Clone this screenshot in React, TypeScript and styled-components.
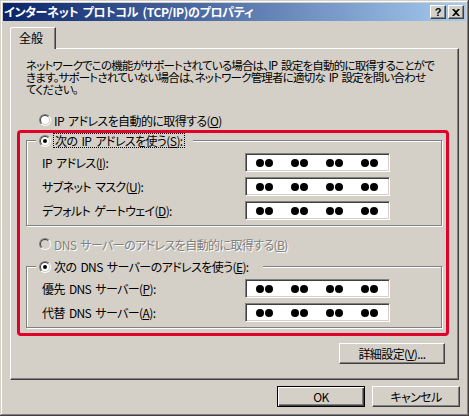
import React from "react";
import styled, { createGlobalStyle, css } from "styled-components";

const FACE = "#d4d0c8";
const UI_FONT = `"Noto Sans CJK JP", "Noto Sans", sans-serif`;

const GlobalStyle = createGlobalStyle`
  html, body { margin: 0; padding: 0; background: ${FACE}; }
  body { font-family: ${UI_FONT}; font-size: 12px; }
  * { box-sizing: border-box; }
`;

const Window = styled.div`
  width: 469px;
  height: 416px;
  background: ${FACE};
  padding: 3px;
  display: flex;
  flex-direction: column;
  color: #000;
  font-feature-settings: "palt";
  letter-spacing: -0.6px;
  word-spacing: 2px;
  box-shadow: inset -1px -1px 0 #404040, inset 1px 1px 0 ${FACE},
    inset -2px -2px 0 #808080, inset 2px 2px 0 #fff;
`;

const TitleBar = styled.div`
  height: 18px;
  display: flex;
  align-items: center;
  padding: 0 2px 0 1px;
  background: linear-gradient(to right, #0a246a, #a6caf0);
`;

const TitleText = styled.div`
  flex: 1;
  color: #fff;
  font-weight: bold;
  font-size: 12px;
  line-height: 18px;
  letter-spacing: -0.3px;
  white-space: nowrap;
`;

const CaptionButton = styled.div`
  width: 16px;
  height: 14px;
  margin-left: 2px;
  background: ${FACE};
  border: 1px solid;
  border-color: #fff #404040 #404040 #fff;
  box-shadow: inset -1px -1px 0 #808080;
  display: flex;
  align-items: center;
  justify-content: center;
  font-family: "Liberation Sans", sans-serif;
  font-weight: bold;
  font-size: 11px;
  line-height: 12px;
  letter-spacing: 0;
`;

const Body = styled.div`
  flex: 1;
  display: flex;
  flex-direction: column;
  padding: 6px 6px 0 7px;
`;

const TabStrip = styled.div`
  display: flex;
  height: 21px;
`;

const Tab = styled.div`
  position: relative;
  z-index: 1;
  width: 46px;
  height: 22px;
  padding: 3px 0 0 8px;
  background: ${FACE};
  border-top: 1px solid #fff;
  border-left: 1px solid #fff;
  border-right: 1px solid #404040;
  border-top-left-radius: 2px;
  box-shadow: inset -1px 0 0 #808080;
  line-height: 14px;
  letter-spacing: 0;
`;

const Panel = styled.div`
  width: 449px;
  height: 332px;
  display: flex;
  flex-direction: column;
  padding-top: 10px;
  border-top: 1px solid #fff;
  border-left: 1px solid #fff;
  border-right: 1px solid #404040;
  border-bottom: 1px solid #404040;
  box-shadow: inset -1px -1px 0 #808080;
`;

const Description = styled.div`
  margin-left: 15px;
  font-size: 11.5px;
  line-height: 12px;
  white-space: nowrap;
  letter-spacing: -0.8px;
`;

const RadioRow = styled.div<{ $mt: number; $ml: number }>`
  display: flex;
  align-items: center;
  gap: 3px;
  height: 14px;
  margin-top: ${(p) => p.$mt}px;
  margin-left: ${(p) => p.$ml}px;
  white-space: nowrap;
`;

const RadioOuter = styled.span`
  width: 12px;
  height: 12px;
  flex: none;
  border-radius: 50%;
  border: 1px solid;
  border-color: #808080 #fff #fff #808080;
  display: flex;
`;

const RadioInner = styled.span<{ $disabled?: boolean }>`
  flex: 1;
  border-radius: 50%;
  border: 1px solid;
  border-color: #404040 ${FACE} ${FACE} #404040;
  background: ${(p) => (p.$disabled ? FACE : "#fff")};
  display: flex;
  align-items: center;
  justify-content: center;
`;

const RadioDot = styled.span`
  width: 4px;
  height: 4px;
  border-radius: 50%;
  background: #000;
`;

const Label = styled.span<{ $disabled?: boolean; $focus?: boolean }>`
  line-height: 13px;
  ${(p) =>
    p.$disabled &&
    css`
      color: #808080;
      text-shadow: 1px 1px 0 #fff;
    `}
  ${(p) =>
    p.$focus &&
    css`
      outline: 1px dotted #000;
      outline-offset: 0;
      padding: 0 1px;
    `}
`;

const Key = styled.u`
  text-decoration: underline;
  text-underline-offset: 1px;
`;

const Radio = ({ checked, disabled }: { checked?: boolean; disabled?: boolean }) => (
  <RadioOuter>
    <RadioInner $disabled={disabled}>{checked && <RadioDot />}</RadioInner>
  </RadioOuter>
);

const RedFrame = styled.div`
  width: 432px;
  margin: 3px 0 0 6px;
  border: 3px solid #e0002a;
  border-radius: 4px;
  padding: 0 0 5px 6px;
  display: flex;
  flex-direction: column;
`;

const GroupBox = styled.fieldset<{ $mt: number }>`
  width: 416px;
  margin: ${(p) => p.$mt}px 0 0 0;
  padding: 0;
  border: 1px solid #808080;
  box-shadow: 1px 1px 0 #fff, inset 1px 1px 0 #fff;
  min-inline-size: 0;
`;

const Legend = styled.legend<{ $w: number }>`
  width: ${(p) => p.$w}px;
  height: 15px;
  margin-left: 9px;
  padding: 0 0 0 3px;
  background: ${FACE};
  display: flex;
  align-items: center;
  gap: 3px;
  white-space: nowrap;
`;

const Rows = styled.div`
  display: flex;
  flex-direction: column;
  gap: 5px;
  padding: 5px 0 5px 15px;
`;

const FieldRow = styled.div`
  display: flex;
  align-items: center;
  height: 19px;
`;

const FieldLabel = styled.span`
  width: 203px;
  white-space: nowrap;
  line-height: 13px;
`;

const IpBox = styled.div`
  width: 145px;
  height: 19px;
  background: #fff;
  border: 1px solid;
  border-color: #808080 #fff #fff #808080;
  box-shadow: inset 1px 1px 0 #404040, inset -1px -1px 0 ${FACE};
  display: flex;
  align-items: center;
  gap: 18px;
  padding-left: 10px;
`;

const DotPair = styled.span`
  display: flex;
  gap: 1px;
`;

const Dot = styled.span`
  width: 8px;
  height: 8px;
  border-radius: 50%;
  background: #000;
`;

const MaskedIp = () => (
  <IpBox>
    {[0, 1, 2, 3].map((i) => (
      <DotPair key={i}>
        <Dot />
        <Dot />
      </DotPair>
    ))}
  </IpBox>
);

const ButtonRow = styled.div<{ $mt: number; $mr: number }>`
  display: flex;
  justify-content: flex-end;
  gap: 7px;
  margin-top: ${(p) => p.$mt}px;
  margin-right: ${(p) => p.$mr}px;
`;

const Button = styled.div<{ $w: number; $default?: boolean }>`
  width: ${(p) => p.$w}px;
  height: 21px;
  background: ${FACE};
  display: flex;
  align-items: center;
  justify-content: center;
  line-height: 13px;
  white-space: nowrap;
  ${(p) =>
    p.$default
      ? css`
          border: 1px solid #000;
          box-shadow: inset 1px 1px 0 #fff, inset -1px -1px 0 #404040,
            inset -2px -2px 0 #808080;
        `
      : css`
          border: 1px solid;
          border-color: #fff #404040 #404040 #fff;
          box-shadow: inset -1px -1px 0 #808080;
        `}
`;

const Field = ({ children }: { children: React.ReactNode }) => (
  <FieldRow>
    <FieldLabel>{children}</FieldLabel>
    <MaskedIp />
  </FieldRow>
);

export default function App() {
  return (
    <>
      <GlobalStyle />
      <Window>
        <TitleBar>
          <TitleText>インターネット プロトコル (TCP/IP)のプロパティ</TitleText>
          <CaptionButton>?</CaptionButton>
          <CaptionButton>
            <svg width="8" height="7" viewBox="0 0 8 7">
              <path d="M0 0h2l2 2 2-2h2L5 3.5 8 7H6L4 5 2 7H0l3-3.5z" fill="#000" />
            </svg>
          </CaptionButton>
        </TitleBar>
        <Body>
          <TabStrip>
            <Tab>全般</Tab>
          </TabStrip>
          <Panel>
            <Description>
              ネットワークでこの機能がサポートされている場合は、IP 設定を自動的に取得することがで
              <br />
              きます。サポートされていない場合は、ネットワーク管理者に適切な IP 設定を問い合わせ
              <br />
              てください。
            </Description>
            <RadioRow $mt={18} $ml={28}>
              <Radio />
              <Label>
                IP アドレスを自動的に取得する(<Key>O</Key>)
              </Label>
            </RadioRow>
            <RedFrame>
              <GroupBox $mt={0}>
                <Legend $w={157}>
                  <Radio checked />
                  <Label $focus>
                    次の IP アドレスを使う(<Key>S</Key>):
                  </Label>
                </Legend>
                <Rows>
                  <Field>
                    IP アドレス(<Key>I</Key>):
                  </Field>
                  <Field>
                    サブネット マスク(<Key>U</Key>):
                  </Field>
                  <Field>
                    デフォルト ゲートウェイ(<Key>D</Key>):
                  </Field>
                </Rows>
              </GroupBox>
              <RadioRow $mt={11} $ml={13}>
                <Radio disabled />
                <Label $disabled>
                  DNS サーバーのアドレスを自動的に取得する(<Key>B</Key>)
                </Label>
              </RadioRow>
              <GroupBox $mt={8}>
                <Legend $w={227}>
                  <Radio checked />
                  <Label>
                    次の DNS サーバーのアドレスを使う(<Key>E</Key>):
                  </Label>
                </Legend>
                <Rows>
                  <Field>
                    優先 DNS サーバー(<Key>P</Key>):
                  </Field>
                  <Field>
                    代替 DNS サーバー(<Key>A</Key>):
                  </Field>
                </Rows>
              </GroupBox>
            </RedFrame>
            <ButtonRow $mt={7} $mr={13}>
              <Button $w={106}>
                詳細設定(<Key>V</Key>)...
              </Button>
            </ButtonRow>
          </Panel>
          <ButtonRow $mt={6} $mr={0}>
            <Button $w={88} $default>
              OK
            </Button>
            <Button $w={88}>キャンセル</Button>
          </ButtonRow>
        </Body>
      </Window>
    </>
  );
}
